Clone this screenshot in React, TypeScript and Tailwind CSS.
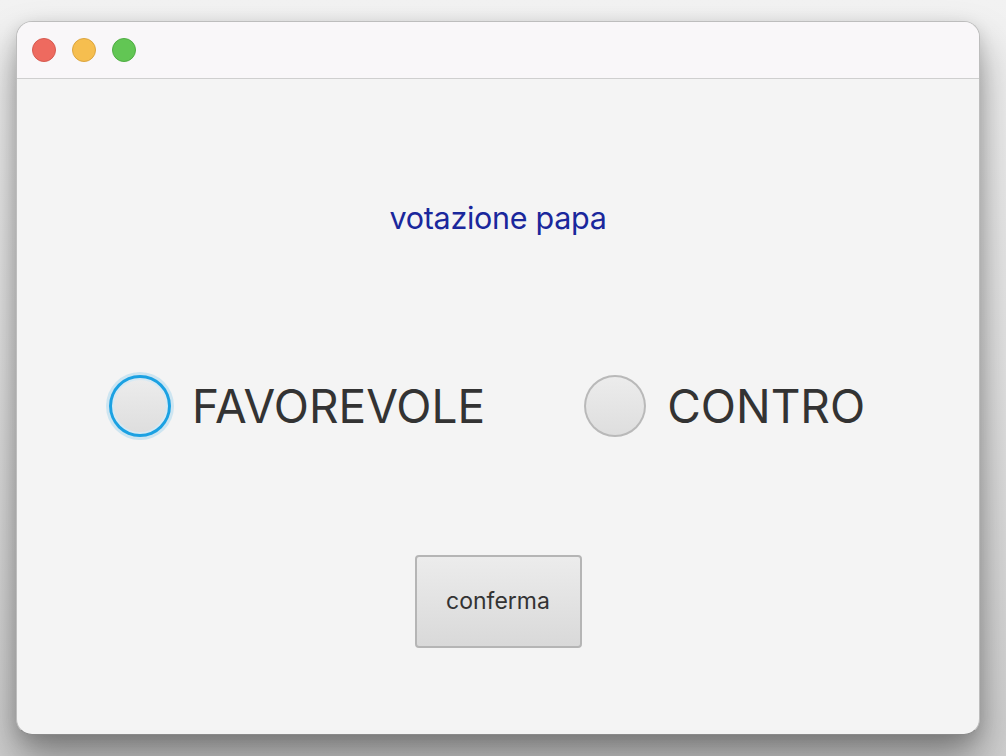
import React from "react";

const font = { fontFamily: "Inter, 'Noto Sans', sans-serif" };

function Radio({ focused }: { focused?: boolean }) {
  return (
    <div
      className={
        "w-[62px] h-[62px] rounded-full flex items-center justify-center " +
        (focused ? "bg-[#1ba1e2] shadow-[0_0_0_3px_rgba(27,161,226,0.18)]" : "bg-[#b9b9b9]")
      }
    >
      <div
        className={
          "rounded-full bg-gradient-to-b from-[#ececec] to-[#dedede] " +
          (focused ? "w-[56px] h-[56px] border-2 border-[#d6e9f3]" : "w-[58px] h-[58px]")
        }
      />
    </div>
  );
}

export default function App() {
  return (
    <div
      className="w-[1006px] h-[756px] bg-gradient-to-b from-[#f2f2f2] via-[#e2e2e2] to-[#cfcfcf] pt-[21px] pl-[16px] overflow-hidden"
      style={font}
    >
      <div className="w-[964px] h-[714px] rounded-[16px] border border-[#bdbdbd] border-b-[#8a8a8a] bg-[#f4f4f4] overflow-hidden flex flex-col shadow-[0_24px_40px_rgba(0,0,0,0.38),0_4px_16px_rgba(0,0,0,0.12)]">
        <div className="h-[57px] shrink-0 bg-[#f9f7f9] border-b border-[#cfcfcf] flex items-center pl-[15px] gap-[16px]">
          <div className="w-[24px] h-[24px] rounded-full bg-[#ee6a5f] border border-[#d65a50]" />
          <div className="w-[24px] h-[24px] rounded-full bg-[#f6be4f] border border-[#dca53f]" />
          <div className="w-[24px] h-[24px] rounded-full bg-[#62c654] border border-[#4fad43]" />
        </div>
        <div className="flex-1 flex flex-col items-center">
          <div className="mt-[121px] text-[30.5px] leading-[36px] tracking-[-0.3px] text-[#1a279c]">
            votazione papa
          </div>
          <div className="mt-[139px] w-full flex items-center pl-[92px]">
            <div className="flex items-center gap-[21px]">
              <Radio focused />
              <span className="text-[46px] leading-[56px] text-[#333333]">FAVOREVOLE</span>
            </div>
            <div className="flex items-center gap-[21px] ml-[99px]">
              <Radio />
              <span className="text-[46px] leading-[56px] text-[#333333]">CONTRO</span>
            </div>
          </div>
          <button className="mt-[118px] w-[167px] h-[93px] rounded-[4px] border-2 border-[#b5b5b5] bg-gradient-to-b from-[#ececec] to-[#d9d9d9] text-[23px] text-[#333333] flex items-center justify-center">
            conferma
          </button>
        </div>
      </div>
    </div>
  );
}
